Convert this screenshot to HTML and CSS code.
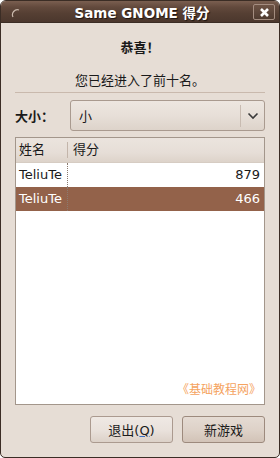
FILE: index.html
```html
<!DOCTYPE html>
<html lang="zh-CN">
<head>
    <meta charset="UTF-8">
    <title>Same GNOME 得分</title>
    <link rel="stylesheet" href="styles.css">
</head>
<body>
    <div class="window">
        <div class="titlebar">
            <svg class="menu-icon" width="10" height="10" viewBox="0 0 10 10">
                <path d="M2 9 A5 5 0 0 1 8 2" fill="none" stroke="#c9b8ab" stroke-width="1.2"/>
            </svg>
            <div class="title">Same GNOME 得分</div>
            <div class="close-btn">
                <svg width="11" height="11" viewBox="0 0 11 11">
                    <path d="M2 2 L9 9 M9 2 L2 9" stroke="#fff" stroke-width="2.6"/>
                </svg>
            </div>
        </div>

        <div class="content">
            <div class="congrats">恭喜！</div>
            <div class="message">您已经进入了前十名。</div>
            <div class="separator"></div>

            <div class="size-row">
                <span class="size-label">大小：</span>
                <div class="combo">
                    <span class="combo-value">小</span>
                    <span class="combo-arrow">
                        <svg width="12" height="8" viewBox="0 0 12 8">
                            <path d="M1.5 1.5 L6 6 L10.5 1.5" fill="none" stroke="#3a3a3a" stroke-width="1.6"/>
                        </svg>
                    </span>
                </div>
            </div>

            <div class="score-list">
                <div class="list-header">
                    <div class="col-name">姓名</div>
                    <div class="col-score">得分</div>
                </div>
                <div class="list-row">
                    <div class="col-name">TeliuTe</div>
                    <div class="col-score">879</div>
                </div>
                <div class="list-row selected">
                    <div class="col-name">TeliuTe</div>
                    <div class="col-score">466</div>
                </div>
                <div class="list-fill">
                    <span class="watermark">《基础教程网》</span>
                </div>
            </div>

            <div class="buttons">
                <button class="btn">退出(<u>Q</u>)</button>
                <button class="btn btn-default">新游戏</button>
            </div>
        </div>
    </div>
</body>
</html>
```

FILE: styles.css
```css
* {
    margin: 0;
    padding: 0;
    box-sizing: border-box;
}

body {
    width: 280px;
    height: 458px;
    background: #ffffff;
    font-family: "DejaVu Sans", "Noto Sans CJK SC", sans-serif;
    font-size: 13px;
    color: #1a1a1a;
}

.window {
    width: 280px;
    height: 458px;
    border: 1px solid #3b2d25;
    border-radius: 6px 6px 5px 5px;
    background: #e6ddd5;
    overflow: hidden;
    display: flex;
    flex-direction: column;
}

.titlebar {
    height: 22px;
    flex: none;
    display: flex;
    align-items: center;
    position: relative;
    background: linear-gradient(#7a5f50 0%, #62493c 30%, #553f33 60%, #4b372d 100%);
    border-bottom: 1px solid #3b2d25;
}

.menu-icon {
    position: absolute;
    left: 10px;
    top: 7px;
}

.title {
    flex: 1;
    text-align: center;
    color: #ffffff;
    font-weight: bold;
    font-size: 13.5px;
    text-shadow: 1px 1px 1px #1e1510;
    padding-left: 4px;
}

.close-btn {
    position: absolute;
    right: 4px;
    top: 3px;
    width: 22px;
    height: 16px;
    border: 1px solid #a48d80;
    border-radius: 2px;
    background: linear-gradient(#6e5446, #4f3b30);
    display: flex;
    align-items: center;
    justify-content: center;
}

.content {
    flex: 1;
    display: flex;
    flex-direction: column;
    padding: 0 14px;
}

.congrats {
    text-align: center;
    font-weight: bold;
    font-family: "Noto Sans CJK JP", sans-serif;
    margin-top: 14px;
    height: 20px;
    line-height: 20px;
}

.message {
    text-align: center;
    margin-top: 14px;
    height: 20px;
    line-height: 20px;
}

.separator {
    height: 1px;
    background: #c9b9ad;
    margin-top: 1px;
}

.size-row {
    display: flex;
    align-items: center;
    margin-top: 7px;
    height: 31px;
}

.size-label {
    font-weight: bold;
    font-family: "Noto Sans CJK JP", sans-serif;
    width: 55px;
}

.combo {
    flex: 1;
    height: 31px;
    border: 1px solid #a99a8f;
    border-radius: 3px;
    background: linear-gradient(#ede6e0 0%, #e7dfd8 50%, #ddd3ca 100%);
    display: flex;
    align-items: center;
}

.combo-value {
    flex: 1;
    padding-left: 8px;
}

.combo-arrow {
    width: 24px;
    height: 22px;
    border-left: 1px solid #c8bbb1;
    display: flex;
    align-items: center;
    justify-content: center;
}

.score-list {
    margin-top: 6px;
    height: 268px;
    border: 1px solid #a3968b;
    background: #ffffff;
    display: flex;
    flex-direction: column;
}

.list-header {
    display: flex;
    height: 25px;
    line-height: 24px;
    background: linear-gradient(#ebe4de 0%, #e6ded7 60%, #ddd3ca 100%);
    border-bottom: 1px solid #d6ccc3;
}

.list-header .col-name {
    border-right: 1px solid #c3b5aa;
    margin: 4px 0;
    line-height: 16px;
}

.list-header .col-score {
    line-height: 24px;
    padding-left: 5px;
}

.col-name {
    width: 52px;
    padding-left: 3px;
    flex: none;
}

.col-score {
    flex: 1;
}

.list-row {
    display: flex;
    height: 24px;
    line-height: 24px;
}

.list-row .col-name {
    border-right: 1px dotted #8c7a6f;
    overflow: hidden;
    white-space: nowrap;
}

.list-row .col-score {
    text-align: right;
    padding-right: 4px;
}

.list-row.selected {
    background: #93624a;
    color: #ffffff;
}

.list-fill {
    flex: 1;
    display: flex;
    align-items: flex-end;
    justify-content: flex-end;
    padding: 0 3px 7px 0;
}

.watermark {
    color: #f5a360;
    font-size: 12px;
    font-family: "Noto Sans CJK SC", sans-serif;
}

.buttons {
    display: flex;
    justify-content: flex-end;
    gap: 9px;
    margin-top: 11px;
}

.btn {
    width: 83px;
    height: 27px;
    border: 1px solid #ab9a8f;
    border-radius: 3px;
    background: linear-gradient(#efe9e4 0%, #e9e1db 55%, #dcd1c8 100%);
    font-family: "DejaVu Sans", "Noto Sans CJK SC", sans-serif;
    font-size: 13px;
    color: #1a1a1a;
}

.btn u {
    text-decoration-color: #3a6fc4;
}

.btn-default {
    border-color: #9d8a7d;
    background: linear-gradient(#e5dbd3 0%, #ddd1c7 55%, #d2c3b7 100%);
}
```
